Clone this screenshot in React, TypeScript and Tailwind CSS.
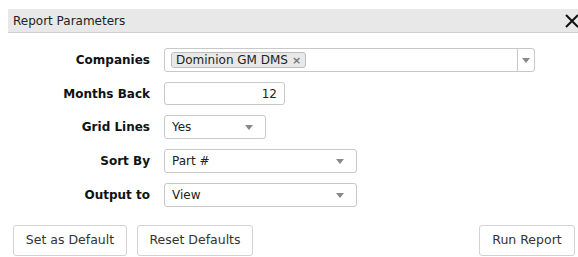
import React from 'react';

const font = { fontFamily: '"DejaVu Sans", Verdana, sans-serif' };

function Caret() {
  return (
    <svg width="8" height="5" viewBox="0 0 8 5" className="shrink-0">
      <path d="M0 0h8L4 5z" fill="#888" />
    </svg>
  );
}

function Select({ value, width }: { value: string; width: string }) {
  return (
    <div className={`${width} h-[24px] border border-[#c8c8c8] rounded-[3px] bg-white flex items-center pl-[7px] pr-[12px] text-[12px] text-[#222]`}>
      <span className="flex-1">{value}</span>
      <Caret />
    </div>
  );
}

function Row({ label, children }: { label: string; children: React.ReactNode }) {
  return (
    <div className="flex items-center">
      <div className="w-[164px] text-right font-bold text-[12px] text-[#111] pr-[14px]">{label}</div>
      {children}
    </div>
  );
}

function Button({ children, className = '' }: { children: React.ReactNode; className?: string }) {
  return (
    <button className={`h-[31px] border border-[#d2d2d2] rounded-[3px] bg-white text-[12.5px] text-[#333] ${className}`}>
      {children}
    </button>
  );
}

export default function App() {
  return (
    <div className="w-[578px] h-[257px] bg-white overflow-hidden pt-[9px]" style={font}>
      <div className="ml-[8px] h-[24px] bg-[#e8e8e8] border-b border-[#d0d0d0] flex items-center justify-between pl-[5px]">
        <span className="text-[12px] text-[#222]">Report Parameters</span>
        <svg width="14" height="14" viewBox="0 0 14 14" className="mr-[-1px]">
          <path d="M1 1L13 13M13 1L1 13" stroke="#111" strokeWidth="2" />
        </svg>
      </div>

      <div className="flex flex-col gap-[10px] mt-[15px]">
        <Row label="Companies">
          <div className="w-[371px] h-[24px] border border-[#c8c8c8] rounded-[3px] bg-white flex items-center">
            <div className="flex-1 pl-[6px] flex items-center">
              <span className="h-[16px] border border-[#bdbdbd] rounded-[3px] bg-[#e8e8e8] px-[4px] flex items-center text-[12px] text-[#222] leading-none">
                Dominion GM DMS <span className="ml-[4px] text-[#777] text-[11px] font-bold">×</span>
              </span>
            </div>
            <div className="w-[17px] h-full border-l border-[#c8c8c8] flex items-center justify-center">
              <Caret />
            </div>
          </div>
        </Row>
        <Row label="Months Back">
          <div className="w-[121px] h-[23px] border border-[#c8c8c8] rounded-[3px] bg-white flex items-center justify-end pr-[7px] text-[12px] text-[#222]">
            12
          </div>
        </Row>
        <Row label="Grid Lines">
          <Select value="Yes" width="w-[102px]" />
        </Row>
        <Row label="Sort By">
          <Select value="Part #" width="w-[193px]" />
        </Row>
        <Row label="Output to">
          <Select value="View" width="w-[193px]" />
        </Row>
      </div>

      <div className="flex items-center mt-[18px] pl-[13px] pr-[3px]">
        <Button className="w-[114px]">Set as Default</Button>
        <Button className="w-[116px] ml-[10px]">Reset Defaults</Button>
        <Button className="w-[96px] ml-auto">Run Report</Button>
      </div>
    </div>
  );
}
